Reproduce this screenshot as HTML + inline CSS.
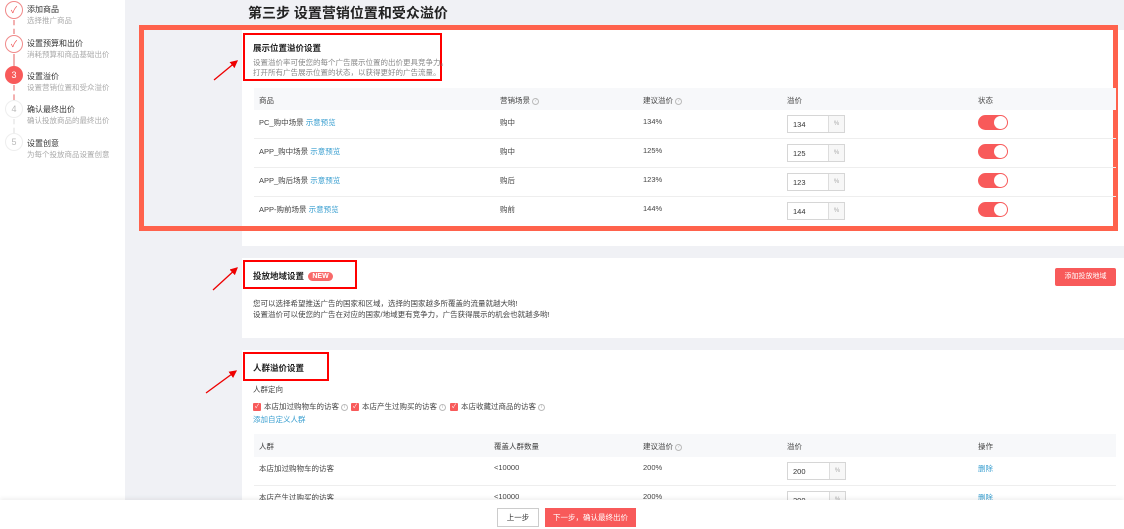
<!DOCTYPE html>
<html><head><meta charset="utf-8"><style>
*{margin:0;padding:0;box-sizing:border-box}
body{width:1124px;height:529px;overflow:hidden;background:#f0f1f5;font-family:"Liberation Sans","Noto Sans CJK SC",sans-serif;font-size:8px;color:#333;position:relative}
.a{position:absolute}
.side{left:0;top:0;width:125px;height:529px;background:#fff}
.c{width:18px;height:18px;border-radius:50%;border:1px solid #eee;text-align:center;line-height:16px;font-size:9px;color:#bbb;background:#fff}
.c.d{border-color:#f08a8a;color:#f05050}
.c.on{background:#f85a5a;border-color:#f85a5a;color:#fff}
.st{font-size:8px;color:#333}.ss{font-size:7.5px;color:#aaa}
.pan{background:#fff;left:242px;right:0}
.th{background:#f7f8fa;left:254px;width:862px;height:22px}
.row{left:254px;width:862px;border-bottom:1px solid #eee;height:29px}
.t{font-size:7.5px;color:#444}
.lk{color:#3a9fd0}
.inp{width:58px;height:18px;border:1px solid #d6d6d6;background:#fff}
.inp span{position:absolute;left:5px;top:4px;font-size:7.5px}
.inp i{position:absolute;right:0;top:0;width:16px;height:16px;border-left:1px solid #ddd;background:#f7f7f7;font-style:normal;color:#aaa;font-size:6px;text-align:center;line-height:16px}
.tg{width:30px;height:15px;border-radius:8px;background:#f85a5a}
.tg:after{content:"";position:absolute;right:1px;top:1px;width:13px;height:13px;border-radius:50%;background:#fff}
.rb{border:2px solid #f00}
.q{display:inline-block;width:7px;height:7px;border:1px solid #bbb;border-radius:50%;font-size:5px;line-height:5px;text-align:center;color:#bbb;vertical-align:middle;margin-left:2px}
.cb{display:inline-block;width:8px;height:8px;background:#f85a5a;border-radius:1px;vertical-align:middle;margin-right:3px;color:#fff;font-size:6px;line-height:8px;text-align:center}
</style></head><body>
<div class="a side"></div>
<div class="a" style="left:13px;top:20px;width:2px;height:14px;border-left:2px dashed #f3b0b0"></div>
<div class="a" style="left:13px;top:54px;width:2px;height:12px;border-left:2px dashed #f3b0b0"></div>
<div class="a" style="left:13px;top:85px;width:2px;height:15px;border-left:2px dashed #f3b0b0"></div>
<div class="a" style="left:13px;top:119px;width:2px;height:14px;border-left:2px dashed #eee"></div>
<div class="a c d" style="left:5px;top:1px">✓</div>
<div class="a c d" style="left:5px;top:35px">✓</div>
<div class="a c on" style="left:5px;top:66px">3</div>
<div class="a c" style="left:5px;top:100px">4</div>
<div class="a c" style="left:5px;top:133px">5</div>
<div class="a st" style="left:27px;top:4px">添加商品</div><div class="a ss" style="left:27px;top:15px">选择推广商品</div>
<div class="a st" style="left:27px;top:38px">设置预算和出价</div><div class="a ss" style="left:27px;top:49px">消耗预算和商品基础出价</div>
<div class="a st" style="left:27px;top:71px">设置溢价</div><div class="a ss" style="left:27px;top:82px">设置营销位置和受众溢价</div>
<div class="a st" style="left:27px;top:104px">确认最终出价</div><div class="a ss" style="left:27px;top:115px">确认投放商品的最终出价</div>
<div class="a st" style="left:27px;top:138px">设置创意</div><div class="a ss" style="left:27px;top:149px">为每个投放商品设置创意</div>

<div class="a" style="left:248px;top:3px;font-size:14px;font-weight:bold;color:#222">第三步 设置营销位置和受众溢价</div>

<div class="a pan" style="top:30px;height:216px"></div>
<div class="a pan" style="top:258px;height:80px"></div>
<div class="a pan" style="top:350px;height:160px"></div>

<div class="a" style="left:139px;top:25px;width:979px;height:206px;border:5px solid #ff624c"></div>
<div class="a rb" style="left:243px;top:33px;width:199px;height:48px"></div>
<div class="a" style="left:253px;top:42px;font-size:8.5px;font-weight:bold;color:#222">展示位置溢价设置</div>
<div class="a ss" style="left:253px;top:57px;color:#888">设置溢价率可使您的每个广告展示位置的出价更具竞争力。</div>
<div class="a ss" style="left:253px;top:67px;color:#888">打开所有广告展示位置的状态，以获得更好的广告流量。</div>

<div class="a th" style="top:88px"></div>
<div class="a t" style="left:259px;top:95px">商品</div>
<div class="a t" style="left:500px;top:95px">营销场景<span class="q">?</span></div>
<div class="a t" style="left:643px;top:95px">建议溢价<span class="q">?</span></div>
<div class="a t" style="left:787px;top:95px">溢价</div>
<div class="a t" style="left:978px;top:95px">状态</div>

<div class="a row" style="top:110px"></div><div class="a row" style="top:139px"></div><div class="a row" style="top:168px"></div><div class="a row" style="top:197px;border:none"></div>
<div class="a t" style="left:259px;top:117px">PC_购中场景 <span class="lk">示意预览</span></div>
<div class="a t" style="left:259px;top:146px">APP_购中场景 <span class="lk">示意预览</span></div>
<div class="a t" style="left:259px;top:175px">APP_购后场景 <span class="lk">示意预览</span></div>
<div class="a t" style="left:259px;top:204px">APP-购前场景 <span class="lk">示意预览</span></div>
<div class="a t" style="left:500px;top:117px">购中</div><div class="a t" style="left:500px;top:146px">购中</div><div class="a t" style="left:500px;top:175px">购后</div><div class="a t" style="left:500px;top:204px">购前</div>
<div class="a t" style="left:643px;top:117px">134%</div><div class="a t" style="left:643px;top:146px">125%</div><div class="a t" style="left:643px;top:175px">123%</div><div class="a t" style="left:643px;top:204px">144%</div>
<div class="a inp" style="left:787px;top:115px"><span>134</span><i>%</i></div>
<div class="a inp" style="left:787px;top:144px"><span>125</span><i>%</i></div>
<div class="a inp" style="left:787px;top:173px"><span>123</span><i>%</i></div>
<div class="a inp" style="left:787px;top:202px"><span>144</span><i>%</i></div>
<div class="a tg" style="left:978px;top:115px"></div><div class="a tg" style="left:978px;top:144px"></div><div class="a tg" style="left:978px;top:173px"></div><div class="a tg" style="left:978px;top:202px"></div>

<div class="a rb" style="left:243px;top:260px;width:114px;height:29px"></div>
<div class="a" style="left:253px;top:270px;font-size:8.5px;font-weight:bold;color:#222">投放地域设置 <span style="display:inline-block;background:#f86a6a;color:#fff;font-size:7px;font-weight:bold;border-radius:5px;padding:0 4px;line-height:9px;vertical-align:1px;margin-left:2px">NEW</span></div>
<div class="a" style="left:1055px;top:268px;width:61px;height:18px;background:#f85a5a;color:#fff;font-size:7px;text-align:center;line-height:18px;border-radius:2px">添加投放地域</div>
<div class="a t" style="left:253px;top:298px">您可以选择希望推送广告的国家和区域，选择的国家越多所覆盖的流量就越大哟!</div>
<div class="a t" style="left:253px;top:309px">设置溢价可以使您的广告在对应的国家/地域更有竞争力，广告获得展示的机会也就越多哟!</div>

<div class="a rb" style="left:243px;top:352px;width:86px;height:29px"></div>
<div class="a" style="left:253px;top:362px;font-size:8.5px;font-weight:bold;color:#222">人群溢价设置</div>
<div class="a t" style="left:253px;top:384px">人群定向</div>
<div class="a t" style="left:253px;top:401px"><span class="cb">✓</span>本店加过购物车的访客<span class="q">i</span></div>
<div class="a t" style="left:351px;top:401px"><span class="cb">✓</span>本店产生过购买的访客<span class="q">i</span></div>
<div class="a t" style="left:450px;top:401px"><span class="cb">✓</span>本店收藏过商品的访客<span class="q">i</span></div>
<div class="a t lk" style="left:253px;top:414px">添加自定义人群</div>
<div class="a th" style="top:434px;height:23px"></div>
<div class="a t" style="left:259px;top:441px">人群</div>
<div class="a t" style="left:494px;top:441px">覆盖人群数量</div>
<div class="a t" style="left:643px;top:441px">建议溢价<span class="q">?</span></div>
<div class="a t" style="left:787px;top:441px">溢价</div>
<div class="a t" style="left:978px;top:441px">操作</div>
<div class="a row" style="top:457px"></div>
<div class="a t" style="left:259px;top:463px">本店加过购物车的访客</div><div class="a t" style="left:494px;top:463px">&lt;10000</div><div class="a t" style="left:643px;top:463px">200%</div>
<div class="a inp" style="left:787px;top:462px;width:59px"><span>200</span><i>%</i></div><div class="a t lk" style="left:978px;top:463px">删除</div>
<div class="a t" style="left:259px;top:492px">本店产生过购买的访客</div><div class="a t" style="left:494px;top:492px">&lt;10000</div><div class="a t" style="left:643px;top:492px">200%</div>
<div class="a inp" style="left:787px;top:491px;width:59px"><span>200</span><i>%</i></div><div class="a t lk" style="left:978px;top:492px">删除</div>

<div class="a" style="left:0;top:500px;width:1124px;height:29px;background:#fff;box-shadow:0 -2px 4px rgba(0,0,0,.06)"></div>
<div class="a" style="left:497px;top:508px;width:42px;height:19px;border:1px solid #ccc;background:#fff;font-size:7.5px;text-align:center;line-height:17px">上一步</div>
<div class="a" style="left:545px;top:508px;width:91px;height:19px;background:#f85a5a;color:#fff;font-size:7.5px;text-align:center;line-height:19px">下一步，确认最终出价</div>

<svg class="a" style="left:0;top:0" width="1124" height="529">
<defs><marker id="m" markerWidth="6" markerHeight="6" refX="5" refY="3" orient="auto"><path d="M0,0 L6,3 L0,6 z" fill="#e00"/></marker></defs>
<g stroke="#e00" stroke-width="1.3" marker-end="url(#m)">
<line x1="214" y1="80" x2="237" y2="61"/>
<line x1="213" y1="290" x2="237" y2="268"/>
<line x1="206" y1="393" x2="236" y2="371"/>
</g></svg>
</body></html>
